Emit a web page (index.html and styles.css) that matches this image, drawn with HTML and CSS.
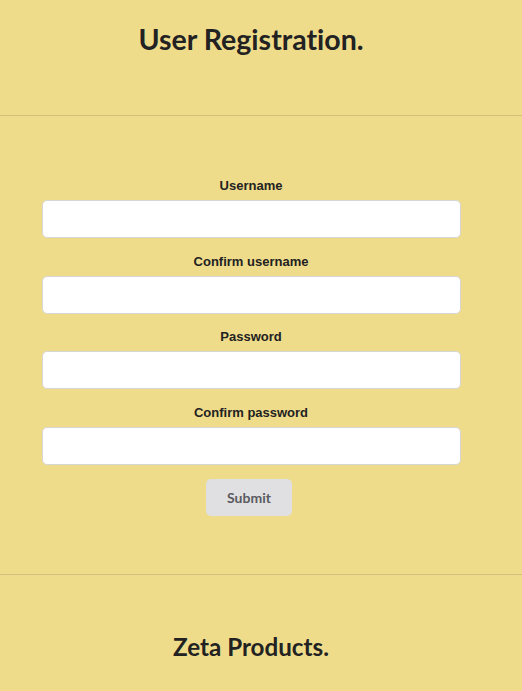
FILE: index.html
```html
<!DOCTYPE html>
<html>
<head>
<meta charset="utf-8">
<link rel="stylesheet" href="styles.css">
</head>
<body>
<header class="site-header">
  <h1 class="title">User Registration.</h1>
</header>
<main class="main">
  <form class="form">
    <div class="group">
      <label class="label">Username</label>
      <input class="field" type="text">
    </div>
    <div class="group">
      <label class="label">Confirm username</label>
      <input class="field" type="text">
    </div>
    <div class="group">
      <label class="label">Password</label>
      <input class="field" type="password">
    </div>
    <div class="group">
      <label class="label">Confirm password</label>
      <input class="field" type="password">
    </div>
    <button class="submit" type="button">Submit</button>
  </form>
</main>
<footer class="site-footer">
  <h2 class="brand">Zeta Products.</h2>
</footer>
</body>
</html>
```
FILE: styles.css
```css
html, body {
  margin: 0;
  padding: 0;
  background: #efdc8b;
  height: 100%;
}
body {
  font-family: "Liberation Sans", Arial, sans-serif;
  color: #222;
  overflow: hidden;
}
.site-header {
  height: 116px;
  border-bottom: 1px solid #d3c07f;
  display: flex;
  justify-content: center;
  padding-right: 20px;
  box-sizing: border-box;
}
.title {
  margin: 22px 0 0;
  font-family: Lato, sans-serif;
  font-weight: 700;
  font-size: 28.5px;
  line-height: 34px;
  color: #222;
  font-variant-ligatures: none;
}
.main {
  height: 458px;
  padding-right: 20px;
  box-sizing: border-box;
  display: flex;
  justify-content: center;
}
.form {
  width: 419px;
  margin-top: 62px;
  display: flex;
  flex-direction: column;
  align-items: center;
}
.group {
  width: 100%;
  display: flex;
  flex-direction: column;
  align-items: center;
  margin-bottom: 15.5px;
}
.label {
  font-size: 13px;
  font-weight: 700;
  line-height: 15px;
  margin-bottom: 7px;
  color: #222;
}
.field {
  width: 100%;
  height: 38px;
  box-sizing: border-box;
  border: 1px solid #d6d6d6;
  border-radius: 5px;
  background: #fff;
  margin: 0;
}
.submit {
  margin-top: -1.5px;
  margin-right: 4px;
  width: 86px;
  height: 37px;
  border: none;
  border-radius: 5px;
  background: #e0e0e2;
  color: #5a5a60;
  font-family: Lato, sans-serif;
  font-weight: 700;
  font-size: 14px;
}
.site-footer {
  border-top: 1px solid #d3c07f;
  display: flex;
  justify-content: center;
  padding-right: 20px;
}
.brand {
  margin: 57px 0 0;
  font-family: Lato, sans-serif;
  font-weight: 700;
  font-size: 24.2px;
  line-height: 30px;
  color: #222;
  font-variant-ligatures: none;
}
```
